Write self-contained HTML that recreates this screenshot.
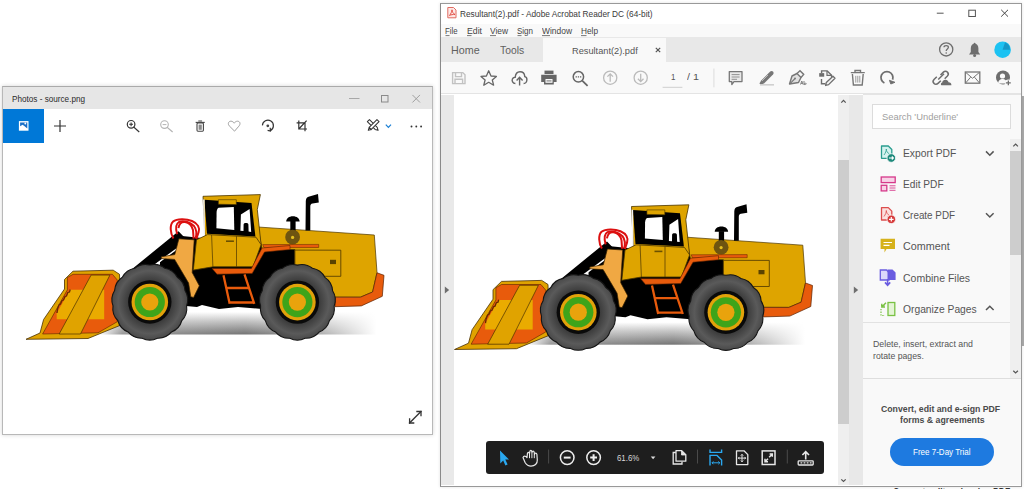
<!DOCTYPE html>
<html><head><meta charset="utf-8">
<style>
*{margin:0;padding:0;box-sizing:border-box}
html,body{width:1024px;height:489px;overflow:hidden;background:#fff;font-family:"Liberation Sans",sans-serif;position:relative}
.a{position:absolute}
.t{position:absolute;white-space:nowrap;line-height:1}
svg{position:absolute;overflow:visible}
</style></head><body>

<!-- ================= PHOTOS WINDOW ================= -->
<div class="a" style="left:2px;top:86px;width:431px;height:349px;border:1px solid #b8b8b8;border-top-color:#aaa;background:#fff;box-shadow:0 0 4px rgba(0,0,0,0.17)"></div>
<div class="a" style="left:3px;top:87px;width:429px;height:22px;background:#e6e6e6"></div>
<div class="a" style="left:3px;top:109px;width:41px;height:34px;background:#0078d7"></div>


<!-- photos icons -->
<svg class="a" style="left:0;top:0" width="1024" height="489" viewBox="0 0 1024 489">
 <g fill="none" stroke-linecap="square">
  <!-- title controls -->
  <line x1="349.5" y1="98.5" x2="359" y2="98.5" stroke="#a8a8a8" stroke-width="1"/>
  <rect x="381.5" y="95.5" width="6.5" height="6.5" stroke="#8a8a8a" stroke-width="1"/>
  <path d="M412.8 95.3 L419.6 102.1 M419.6 95.3 L412.8 102.1" stroke="#a0a0a0" stroke-width="1"/>
  <!-- blue btn icon -->
  <rect x="18.9" y="121.1" width="9.6" height="9.6" fill="#fff" stroke="none"/>
  <path d="M20.1 122.4 H27.3 V128.6 L24.3 126 L22.6 124.8 L20.1 126.3 Z" fill="#1a70c8" stroke="none"/>
  <circle cx="25.3" cy="123.5" r="0.9" fill="#fff" stroke="none"/>
  <!-- plus -->
  <path d="M54 126 L66 126 M60 120 L60 132" stroke="#333" stroke-width="1.2" stroke-linecap="butt"/>
  <!-- zoom in -->
  <circle cx="131.1" cy="124.3" r="3.8" stroke="#333" stroke-width="1.2"/>
  <path d="M133.9 127.1 L138.8 131.6" stroke="#333" stroke-width="1.2"/>
  <path d="M129.2 124.3 L133 124.3 M131.1 122.4 L131.1 126.2" stroke="#333" stroke-width="1.1" stroke-linecap="butt"/>
  <!-- zoom out -->
  <circle cx="164.5" cy="124.6" r="3.8" stroke="#b4b4b4" stroke-width="1.1"/>
  <path d="M167.3 127.4 L172.2 131.6" stroke="#b4b4b4" stroke-width="1.2"/>
  <path d="M162.6 124.6 L166.4 124.6" stroke="#b4b4b4" stroke-width="1" stroke-linecap="butt"/>
  <!-- delete -->
  <path d="M196.2 122.4 L204.2 122.4" stroke="#444" stroke-width="1.1"/>
  <path d="M198.8 121 L201.6 121" stroke="#444" stroke-width="1"/>
  <rect x="197" y="123" width="6.4" height="8.2" rx="0.9" stroke="#444" stroke-width="1.1"/>
  <rect x="198.6" y="124.6" width="3.2" height="5.2" fill="#8a8a8a" stroke="none"/>
  <!-- heart -->
  <path d="M234.2 130.8 L229.2 125.8 C227.6 124 228.3 121.3 230.8 121.2 C232.3 121.1 233.6 122.2 234.2 123.2 C234.8 122.2 236.1 121.1 237.6 121.2 C240.1 121.3 240.8 124 239.2 125.8 Z" stroke="#a0a0a0" stroke-width="1"/>
  <!-- rotate -->
  <path d="M262.4 125.4 A5.5 5.5 0 1 1 270.4 130.6" stroke="#333" stroke-width="1.2" stroke-linecap="butt"/>
  <path d="M270.2 127.8 L270.4 131 L267.6 130.4" stroke="#333" stroke-width="1.2" stroke-linecap="butt"/>
  <circle cx="267.8" cy="125.8" r="1.4" fill="#444" stroke="none"/>
  <!-- crop -->
  <path d="M298.8 120.5 V129 H307 M296.6 122.8 H305 V131.2 M298.8 129 L306.6 120.7" stroke="#333" stroke-width="1.2" stroke-linecap="butt"/>
  <!-- edit pencils -->
  <g transform="translate(373.2 125.4) rotate(-135)"><path d="M-7 0 L-4.2 -1.5 H6.8 V1.5 H-4.2 Z" stroke="#333" stroke-width="1" fill="#fff" stroke-linejoin="round"/></g>
  <g transform="translate(373.2 125.4) rotate(-45)"><path d="M-7 0 L-4.2 -1.5 H6.8 V1.5 H-4.2 Z M-4.2 -1.5 V1.5" stroke="#333" stroke-width="1" fill="#fff" stroke-linejoin="round"/></g>
  <path d="M385.8 124.6 L388.4 127.4 L391 124.6" stroke="#1a7fd4" stroke-width="1.2" stroke-linecap="butt"/>
  <circle cx="411.5" cy="126.5" r="0.95" fill="#333" stroke="none"/>
  <circle cx="416.3" cy="126.5" r="0.95" fill="#333" stroke="none"/>
  <circle cx="421.1" cy="126.5" r="0.95" fill="#333" stroke="none"/>
  <!-- resize -->
  <path d="M409.5 423 L421 411.5" stroke="#333" stroke-width="1.3"/>
  <path d="M409.6 418.3 L409.6 423 L414.3 423 M416.3 411.5 L421 411.5 L421 416.2" stroke="#333" stroke-width="1.3" stroke-linecap="butt"/>
 </g>
</svg>

<!-- ================= ACROBAT WINDOW ================= -->
<div class="a" style="left:1022px;top:96px;width:2px;height:250px;background:#ababab"></div>
<div class="a" style="left:440px;top:3px;width:582px;height:484px;border:1px solid #999;border-left-color:#8a8a8a;background:#fff;box-shadow:0 0 3px rgba(0,0,0,0.12)"></div>
<div class="a" style="left:441px;top:24px;width:580px;height:13px;background:#f9f9f9"></div>
<div class="a" style="left:441px;top:37px;width:580px;height:25px;background:#e8e8e8"></div>
<div class="a" style="left:543px;top:38px;width:123px;height:24px;background:#f9f9f9"></div>
<div class="a" style="left:441px;top:62px;width:580px;height:32px;background:#f9f9f9;border-bottom:1px solid #e4e4e4"></div>

<!-- doc area -->
<div class="a" style="left:441px;top:95px;width:13px;height:390px;background:#e9e9e9"></div>
<div class="a" style="left:838px;top:95px;width:11px;height:390px;background:#efefef"></div>
<div class="a" style="left:838px;top:160px;width:11px;height:264px;background:#cdcdcd"></div>
<div class="a" style="left:849px;top:95px;width:14px;height:390px;background:#e8e8e8"></div>
<div class="a" style="left:863px;top:95px;width:158px;height:390px;background:#f9f9f9"></div>


<!-- search box -->
<div class="a" style="left:872px;top:104px;width:139px;height:25px;background:#fff;border:1px solid #dcdcdc"></div>
<!-- tools list scrollbar -->
<div class="a" style="left:1010px;top:139px;width:11px;height:239px;background:#efefef"></div>
<div class="a" style="left:1010px;top:151px;width:11px;height:104px;background:#cdcdcd"></div>
<!-- separators -->
<div class="a" style="left:863px;top:322px;width:147px;height:1px;background:#e2e2e2"></div>
<div class="a" style="left:863px;top:378px;width:158px;height:1px;background:#dedede"></div>
<div class="a" style="left:863px;top:94px;width:158px;height:1px;background:#e4e4e4"></div>
<!-- trial button -->
<div class="a" style="left:890px;top:438px;width:104px;height:28px;border-radius:14px;background:#1e7ae0"></div>
<!-- bottom floating toolbar -->
<div class="a" style="left:486px;top:441px;width:338px;height:33px;border-radius:3px;background:#1e1e1e"></div>

<!-- acrobat icons -->
<svg class="a" style="left:0;top:0" width="1024" height="489" viewBox="0 0 1024 489">
 <g fill="none" stroke-linecap="butt">
  <!-- pdf title icon -->
  <path d="M447.8 7.5 L453.5 7.5 L456 10 L456 17.8 L447.8 17.8 Z" fill="#fde8e6" stroke="#e06a60" stroke-width="1"/>
  <path d="M449.5 15.5 C451 13.5 452 11.5 452 9.8 C452 11.5 453 13.5 455 14.5 C453 14.2 451 14.8 449.5 15.5 Z" stroke="#e0443a" stroke-width="0.9"/>
  <!-- window controls -->
  <line x1="936.8" y1="13.2" x2="943.6" y2="13.2" stroke="#555" stroke-width="1"/>
  <rect x="968.8" y="10.2" width="6.6" height="6.3" stroke="#555" stroke-width="1"/>
  <path d="M1001.2 9.8 L1008 16.6 M1008 9.8 L1001.2 16.6" stroke="#444" stroke-width="1"/>
  <!-- menu underlines -->
  <path d="M445.5 35.6 H449.5 M467 35.6 H471.5 M490 35.6 H496 M517.5 35.6 H521.5 M542 35.6 H550 M581 35.6 H586.5" stroke="#555" stroke-width="0.8"/>
  <!-- tab close x -->
  <path d="M655.8 47.8 L660.2 52.2 M660.2 47.8 L655.8 52.2" stroke="#555" stroke-width="1.2"/>
  <!-- help -->
  <circle cx="946.2" cy="49.4" r="6.6" stroke="#6e6e6e" stroke-width="1.3"/>
  <path d="M944 47.3 C944 45 948.4 45 948.4 47.3 C948.4 49 946.2 49 946.2 51" stroke="#6e6e6e" stroke-width="1.3"/>
  <circle cx="946.2" cy="53" r="0.8" fill="#6e6e6e"/>
  <!-- bell -->
  <path d="M969 54.5 L980.2 54.5 L978.4 52 L978.4 48.3 C978.4 45.6 977 44 974.6 43.5 C972.2 44 970.8 45.6 970.8 48.3 L970.8 52 Z" fill="#6e6e6e"/>
  <circle cx="974.6" cy="55.6" r="1.5" fill="#6e6e6e"/>
  <circle cx="974.6" cy="43.6" r="0.9" fill="#6e6e6e"/>
  <!-- avatar -->
  <circle cx="1002.6" cy="49.7" r="8.3" fill="#1cc2f2"/>
  <path d="M1002.6 49.7 L1010 49.7 A7.4 7.4 0 0 0 1005 42.6 Z" fill="#1598c8"/>

  <!-- toolbar -->
  <g stroke="#c2c2c2" stroke-width="1.4">
   <path d="M452.6 72.6 H462.8 L465 74.8 V83.6 H452.6 Z"/>
   <path d="M455.5 72.6 V76.6 H461.5 V72.6 M455 83.6 V79.2 H462.6 V83.6"/>
  </g>
  <path d="M488.7 70.8 L491 76 L496.4 76.4 L492.3 80 L493.6 85.2 L488.7 82.3 L483.8 85.2 L485.1 80 L481 76.4 L486.4 76 Z" stroke="#666" stroke-width="1.3" stroke-linejoin="round"/>
  <path d="M515.4 83.5 C512.5 83.5 511.8 80.8 512.3 79.3 C512.7 78 514 77.2 515.2 77.3 C515.5 74 517.5 71.8 520 71.8 C522.8 71.8 524.6 74 524.8 76.6 C526.5 77 527 78.5 526.9 80 C526.7 82 525.4 83.5 523.6 83.5" stroke="#666" stroke-width="1.4"/>
  <path d="M519.6 85.5 V77.5 M516.6 80.4 L519.6 77.3 L522.6 80.4" stroke="#666" stroke-width="1.4"/>
  <path d="M544.5 70.6 H553.5 V74 H544.5 Z" fill="#666"/>
  <path d="M541.2 74.8 H556.6 V82 H553.8 V84.4 H544 V82 H541.2 Z" fill="#666"/>
  <rect x="545.5" y="79" width="7" height="3.8" fill="#f9f9f9"/>
  <rect x="546.5" y="80.3" width="5" height="1.2" fill="#888"/>
  <circle cx="578.4" cy="76.8" r="5.2" stroke="#666" stroke-width="1.5"/>
  <path d="M582.2 80.7 L587.6 85.8" stroke="#666" stroke-width="1.8"/>
  <path d="M575.6 76.8 h1.3 M577.8 76.8 h1.3 M580 76.8 h1.3" stroke="#666" stroke-width="1.2"/>
  <circle cx="610.2" cy="77.7" r="6.6" stroke="#bbb" stroke-width="1.3"/>
  <path d="M610.2 81.7 V73.8 M607.4 76.6 L610.2 73.8 L613 76.6" stroke="#bbb" stroke-width="1.3"/>
  <circle cx="640.7" cy="77.7" r="6.6" stroke="#bbb" stroke-width="1.3"/>
  <path d="M640.7 73.7 V81.6 M637.9 78.8 L640.7 81.6 L643.5 78.8" stroke="#bbb" stroke-width="1.3"/>
  <line x1="662.6" y1="87.3" x2="682.4" y2="87.3" stroke="#cfcfcf" stroke-width="1"/>
  <line x1="713.9" y1="68.5" x2="713.9" y2="87.3" stroke="#dcdcdc" stroke-width="1"/>
  <!-- comment -->
  <path d="M729.3 71.6 H742 V81.6 H734 L731.8 84.6 V81.6 H729.3 Z" fill="#e9e9e9" stroke="#777" stroke-width="1.3" stroke-linejoin="round"/>
  <path d="M731.6 74.6 H739.6 M731.6 77 H739.6 M731.6 79.3 H737" stroke="#888" stroke-width="0.9"/>
  <!-- highlighter -->
  <path d="M759.4 83.6 L761.2 80.5 L770.2 71.5 C771 70.8 772.2 70.8 773 71.6 C773.8 72.4 773.8 73.6 773 74.4 L764 83.4 L761 84.4 Z" fill="#777"/>
  <path d="M762 81 L768 75" stroke="#bbb" stroke-width="1"/>
  <rect x="760" y="84" width="14" height="1.6" fill="#d0d0d0"/>
  <!-- pen sign -->
  <path d="M789.5 84 L792 76 L797 73.5 L801 77.5 L798.5 82.5 Z" fill="#e0e0e0" stroke="#777" stroke-width="1.4" stroke-linejoin="round"/>
  <path d="M797 73.5 L800 70.7 L803.7 74.4 L801 77.5" stroke="#777" stroke-width="1.4"/>
  <path d="M789.8 83.8 L794.6 79" stroke="#777" stroke-width="1.1"/>
  <circle cx="795" cy="78.6" r="1" fill="#777"/>
  <path d="M800.5 84.5 L801.8 81 L803 84.5 M801 83.4 H802.7 M804 81 V84.5 C804 83 806.3 83 806.3 83.8 C806.3 84.6 804 84.6 804 84.5" stroke="#777" stroke-width="0.9"/>
  <!-- organize -->
  <path d="M821.6 73 V70.9 H827.2 L831.6 75.3 V77" stroke="#6e6e6e" stroke-width="1.4"/>
  <path d="M827 71 V75.4 H831.6" stroke="#6e6e6e" stroke-width="1.2"/>
  <rect x="819.2" y="73.1" width="5" height="3.6" fill="#6e6e6e"/>
  <path d="M821.5 79 V83.7 H825.3" stroke="#6e6e6e" stroke-width="1.4"/>
  <path d="M825.6 85.5 L826.3 82.4 L833 76.2 L835 78.2 L828.6 84.6 Z" fill="#f4f4f4" stroke="#6e6e6e" stroke-width="1.3" stroke-linejoin="round"/>
  <!-- trash -->
  <path d="M850.8 72.6 H864.8 M855 72.6 V70.5 H860.5 V72.6" stroke="#777" stroke-width="1.4"/>
  <path d="M852.4 74 L853.4 85 H862.2 L863.2 74" stroke="#777" stroke-width="1.4"/>
  <path d="M855.8 75.8 V82.6 M857.8 75.8 V82.6 M859.8 75.8 V82.6" stroke="#999" stroke-width="1"/>
  <!-- rotate -->
  <path d="M884.4 83 A6 6 0 1 1 892.6 79.6" stroke="#6e6e6e" stroke-width="1.8"/>
  <path d="M889.4 80.3 L895 82.3 L890.8 84 Z" fill="#6e6e6e" stroke="#6e6e6e" stroke-width="0.9" stroke-linejoin="round"/>
  <!-- link -->
  <path d="M940.5 75 L943.4 72.1 C944.6 70.9 946.3 70.9 947.4 72.1 C948.5 73.2 948.5 74.9 947.4 76.1 L944.7 78.8 M940.8 80.7 L938 83.4 C936.8 84.6 935.1 84.6 934 83.4 C932.9 82.3 932.9 80.6 934 79.5 L936.8 76.7" stroke="#6e6e6e" stroke-width="1.5"/>
  <path d="M938.2 79.5 L944 73.7" stroke="#6e6e6e" stroke-width="1.5"/>
  <path d="M941.4 85.2 C940.6 85.2 940.6 82.8 942.2 82.5 C942.6 80.4 944.2 79.6 945.6 79.8 C947 80 948.2 80.8 948.5 82.3 C950.3 82.3 951.6 83.3 951.4 85.2 Z" fill="#6e6e6e"/>
  <!-- mail -->
  <rect x="965.3" y="72" width="14.5" height="11.2" stroke="#777" stroke-width="1.3"/>
  <path d="M965.6 72.3 L972.5 78.3 L979.5 72.3 M965.6 83 L970.6 77.2 M979.5 83 L974.5 77.2" stroke="#777" stroke-width="1"/>
  <!-- person -->
  <circle cx="1003" cy="77.5" r="7" fill="#6e6e6e"/>
  <circle cx="1002.5" cy="76" r="2.6" fill="#f9f9f9"/>
  <path d="M998 83.5 C998.5 80 1000.5 79 1002.5 79 C1004.5 79 1006.5 80 1007 83.5 Z" fill="#f9f9f9"/>
  <circle cx="1008.3" cy="82.8" r="3.2" fill="#f9f9f9"/>
  <path d="M1005.9 82.8 H1010.8 M1008.35 80.4 V85.2" stroke="#6e6e6e" stroke-width="1.3"/>

  <!-- left nav arrow / splitter arrow / scroll arrows -->
  <path d="M444.8 286.4 L449.2 290 L444.8 293.6 Z" fill="#6e6e6e"/>
  <path d="M853.8 286.4 L858.2 290 L853.8 293.6 Z" fill="#6e6e6e"/>
  <path d="M841.3 102.6 L843.5 100.4 L845.7 102.6" stroke="#555" stroke-width="1.2"/>
  <path d="M841.3 479.3 L843.5 481.5 L845.7 479.3" stroke="#555" stroke-width="1.2"/>
  <path d="M1013.3 146.3 L1015.6 144 L1017.9 146.3" stroke="#555" stroke-width="1.2"/>
  <path d="M1013.3 370.8 L1015.6 373 L1017.9 370.8" stroke="#555" stroke-width="1.2"/>

  <!-- tool pane icons -->
  <path d="M881.5 146 H888.3 L891.8 149.5 V158.3 H881.5 Z" fill="#d4f2ee" stroke="#2a9d8f" stroke-width="1.3" stroke-linejoin="round"/>
  <path d="M884 155 C885.5 153 886.3 151 886.3 149 C886.3 151 887.5 153 889.5 154" stroke="#2a9d8f" stroke-width="0.8"/>
  <circle cx="891.3" cy="158" r="4.3" fill="#1f8a7c" stroke="#f9f9f9" stroke-width="0.8"/>
  <path d="M889 158 H893.2 M891.8 156.5 L893.4 158 L891.8 159.5" stroke="#fff" stroke-width="1.1"/>
  <rect x="881.2" y="177" width="14" height="5.6" fill="#f7d2e6" stroke="#d6388a" stroke-width="1.3"/>
  <rect x="881.2" y="185.3" width="5.6" height="5.6" fill="#f7d2e6" stroke="#d6388a" stroke-width="1.3"/>
  <path d="M889.5 185.8 H895.5 M889.5 188 H895.5 M889.5 190.3 H895.5" stroke="#d6388a" stroke-width="0.9"/>
  <path d="M881.5 207.6 H888.3 L891.8 211.1 V220 H881.5 Z" fill="#fbe0de" stroke="#dc4d4d" stroke-width="1.3" stroke-linejoin="round"/>
  <path d="M884 216.5 C885.5 214.5 886.3 212.5 886.3 210.5 C886.3 212.5 887.5 214.5 889.5 215.5" stroke="#dc4d4d" stroke-width="0.8"/>
  <circle cx="891.3" cy="219.3" r="4.3" fill="#d63a3a" stroke="#f9f9f9" stroke-width="0.8"/>
  <path d="M889 219.3 H893.6 M891.3 217 V221.6" stroke="#fff" stroke-width="1.2"/>
  <path d="M880.6 238.8 H895 V249 H886.5 L884.5 252.6 V249 H880.6 Z" fill="#d6b21c"/>
  <path d="M883.5 242.5 H892 M883.5 245.4 H889.5" stroke="#fff" stroke-width="1.1"/>
  <path d="M880.3 270 H886.5 L889 272.5 V280 H880.3 Z" fill="#dcd8fa" stroke="#6a5ce0" stroke-width="1.3"/>
  <path d="M887.5 269.5 H892.5 L895.6 272.6 V280 H887.5 Z" fill="#6a5ce0"/>
  <path d="M887.6 279 V285 M885 282.4 L887.6 285.2 L890.2 282.4" stroke="#6a5ce0" stroke-width="1.6"/>
  <rect x="888" y="302.5" width="6.8" height="13" fill="#e4f4d6" stroke="#79c143" stroke-width="1.3"/>
  <path d="M881 305.5 H884.5 M881 309 V315.5 H885" stroke="#79c143" stroke-width="1.2" stroke-dasharray="1.3 1.3"/>
  <path d="M886 302.8 L882 306.8 M881.8 303.8 V307 H885" stroke="#79c143" stroke-width="1.4"/>
  <!-- chevrons -->
  <path d="M986 151.4 L989.8 155.2 L993.6 151.4" stroke="#555" stroke-width="1.5"/>
  <path d="M986 213.2 L989.8 217 L993.6 213.2" stroke="#555" stroke-width="1.5"/>
  <path d="M986 310 L989.8 306.2 L993.6 310" stroke="#555" stroke-width="1.5"/>

  <!-- bottom toolbar icons -->
  <path d="M500 450.4 L509 459.4 L505.3 459.6 L507.6 464.6 L505.4 465.5 L503.2 460.5 L500.3 463.4 Z" fill="#2aa8f0"/>
  <path d="M523 457.6 C523.6 455.6 525.6 455.6 527 457.6 L527.4 453.6 C527.6 451.9 529.3 451.9 529.5 453.6 L529.8 451.6 C530.1 449.9 531.6 449.9 531.8 451.6 L532 452.4 C532.3 450.8 534 450.8 534.2 452.4 L534.5 454.4 C534.8 452.8 536.6 452.8 536.9 454.4 L537.3 460 C537.5 464 534.6 466.1 531 466.1 C528 466.1 526.4 464.6 525.1 462.5 Z" stroke="#e8e8e8" stroke-width="1.2" stroke-linejoin="round"/>
  <path d="M529.5 453.6 V458.2 M531.9 452.4 V458.2 M534.3 454.2 V458.2" stroke="#e8e8e8" stroke-width="1"/>
  <line x1="548.6" y1="449.6" x2="548.6" y2="463.5" stroke="#4a4a4a" stroke-width="1"/>
  <circle cx="567.2" cy="457.6" r="6.8" stroke="#eee" stroke-width="1.5"/>
  <path d="M563.8 457.6 H570.6" stroke="#eee" stroke-width="2"/>
  <circle cx="593.6" cy="457.6" r="6.8" stroke="#eee" stroke-width="1.5"/>
  <path d="M590.2 457.6 H597 M593.6 454.2 V461" stroke="#eee" stroke-width="2"/>
  <path d="M650.8 456.6 H655.4 L653.1 459.2 Z" fill="#ddd"/>
  <path d="M675.8 452.5 H673.2 V464 H682 V461.8" stroke="#e8e8e8" stroke-width="1.3"/>
  <path d="M676 450.6 H681.7 L685.8 454.7 V461.2 H676 Z" stroke="#e8e8e8" stroke-width="1.3" stroke-linejoin="round"/>
  <path d="M681.5 450.8 V455 H685.6" fill="#e8e8e8" stroke="#e8e8e8" stroke-width="0.8"/>
  <line x1="697.5" y1="449.6" x2="697.5" y2="463.5" stroke="#4a4a4a" stroke-width="1"/>
  <path d="M710 449.5 V452.4 H721.6 V449.5" stroke="#2aa8f0" stroke-width="1.4"/>
  <path d="M710 465.6 V455.4 H717 L721.6 460 V465.6" stroke="#2aa8f0" stroke-width="1.4"/>
  <path d="M712 462.8 H719.8 M713.4 461.4 L712 462.8 L713.4 464.2 M718.4 461.4 L719.8 462.8 L718.4 464.2" stroke="#2aa8f0" stroke-width="1"/>
  <path d="M736.5 450.8 H744 L747.8 454.6 V464.6 H736.5 Z" stroke="#e8e8e8" stroke-width="1.3" stroke-linejoin="round"/>
  <path d="M742 454.4 V461.8 M738.3 458.1 H745.7 M740.8 455.6 L742 454.4 L743.2 455.6 M740.8 460.6 L742 461.8 L743.2 460.6 M739.5 456.9 L738.3 458.1 L739.5 459.3 M744.5 456.9 L745.7 458.1 L744.5 459.3" stroke="#e8e8e8" stroke-width="1"/>
  <rect x="762.2" y="450.9" width="12.8" height="13.6" stroke="#e8e8e8" stroke-width="1.5"/>
  <path d="M765 461.8 L768 458.8 M765 458.8 V461.8 H768 M769.2 457.2 L772.3 454 M769.6 454 H772.3 V456.7" stroke="#e8e8e8" stroke-width="1.5"/>
  <line x1="787.3" y1="449.6" x2="787.3" y2="463.5" stroke="#4a4a4a" stroke-width="1"/>
  <path d="M805.7 459.4 V451.8 M802.4 455 L805.7 451.6 L809 455" stroke="#e8e8e8" stroke-width="1.6"/>
  <rect x="798.2" y="460.8" width="15" height="4.2" rx="0.8" stroke="#e8e8e8" stroke-width="1.3"/>
  <path d="M800.5 462.9 h1.8 M803.6 462.9 h1.8 M806.7 462.9 h1.8 M809.8 462.9 h1.8" stroke="#e8e8e8" stroke-width="1.2"/>
 </g>
</svg>


<!-- loaders -->
<svg class="a" style="left:0;top:0" width="1024" height="489" viewBox="0 0 1024 489">
 <defs>
  <radialGradient id="tire" cx="0.5" cy="0.5" r="0.52">
   <stop offset="0.55" stop-color="#3c3c3c"/>
   <stop offset="0.8" stop-color="#5a5a5a"/>
   <stop offset="1" stop-color="#444"/>
  </radialGradient>
  <linearGradient id="shad" x1="0" y1="0" x2="0" y2="1">
   <stop offset="0" stop-color="#fff"/>
   <stop offset="0.4" stop-color="#c4c4c4"/>
   <stop offset="1" stop-color="#747474"/>
  </linearGradient>
  <linearGradient id="shadx" x1="0" y1="0" x2="1" y2="0">
   <stop offset="0" stop-color="#fff" stop-opacity="1"/>
   <stop offset="0.08" stop-color="#fff" stop-opacity="0.25"/>
   <stop offset="0.5" stop-color="#fff" stop-opacity="0"/>
   <stop offset="0.72" stop-color="#fff" stop-opacity="0.3"/>
   <stop offset="0.95" stop-color="#fff" stop-opacity="1"/>
  </linearGradient>
  <g id="wheel">
   <path d="M0.00 -37.00Q8.32 -39.13 15.05 -33.80Q23.51 -32.36 27.50 -24.76Q34.64 -20.00 35.19 -11.43Q39.78 -4.18 36.80 3.87Q38.04 12.36 32.04 18.50Q29.73 26.77 21.75 29.93Q16.27 36.54 7.69 36.19Q0.00 40.00 -7.69 36.19Q-16.27 36.54 -21.75 29.93Q-29.73 26.77 -32.04 18.50Q-38.04 12.36 -36.80 3.87Q-39.78 -4.18 -35.19 -11.43Q-34.64 -20.00 -27.50 -24.76Q-23.51 -32.36 -15.05 -33.80Q-8.32 -39.13 -0.00 -37.00Z" fill="url(#tire)" stroke="#151515" stroke-width="1.1"/>
   <circle r="21.7" fill="#0a0a0a"/>
   <circle r="18.3" fill="#e2a20a"/>
   <circle r="15.1" fill="#3ea41a"/>
   <circle r="8.6" fill="#e9a30c"/>
  </g>
  <g id="loader">
   <!-- shadow -->
   <rect x="100" y="312" width="290" height="22.5" fill="url(#shad)"/>
   <rect x="99" y="311" width="292" height="24" fill="url(#shadx)"/>
   <!-- black undercarriage -->
   <path d="M160 262 L182 236 L262 244 L332 252 L334 300 L262 309 L238 307 L219 309 L202 305 L197 307 L186 306 L160 290 Z" fill="#000"/>
   <!-- body -->
   <path d="M258 227 L374.3 235 L377 272.5 L372.6 292 L360.4 297.2 L310 297 L294.9 276.3 L294.9 249.5 L262 249 Z" fill="#dea400" stroke="#4a3500" stroke-width="0.7"/>
   <!-- bumper -->
   <path d="M377 272.8 L384 275.3 L382.3 296.3 L361.3 305.9 L335 306.7 L335 297.2 L360.4 297.2 L372.6 292 Z" fill="#e85b0c" stroke="#5a2000" stroke-width="0.7"/>
   <!-- engine door -->
   <path d="M294.9 250.1 L340.8 250.2 L340.8 276.3 L294.9 276.3 Z" fill="#dea400" stroke="#4a3500" stroke-width="0.8"/>
   <rect x="330" y="259.8" width="6" height="4.3" fill="#5a4200"/>
   <!-- exhaust -->
   <path d="M305.5 230.5 L305.8 201 C306 198.5 307 197.3 308.5 196.8 L318 194 L318.8 202.5 L312.5 203.5 C311 203.8 310.3 204.8 310.3 206.5 L310.3 230.5 Z" fill="#000"/>
   <!-- air intake -->
   <path d="M290.3 221 L295.6 221 L295.6 232 L290.3 232 Z" fill="#000"/>
   <path d="M286.2 221.6 C286.2 218.5 289 216.3 292.9 216.3 C296.8 216.3 299.6 218.5 299.6 221.6 Z" fill="#000"/>
   <circle cx="292.6" cy="237.1" r="7.4" fill="#6e5410"/>
   <circle cx="292.6" cy="237.4" r="1.6" fill="#e4c020"/>
   <!-- fender line -->
   <path d="M262.7 244.6 L318.7 244.4 L318.7 247.5 L264 247.7 Z" fill="#e85b0c" stroke="#5a2000" stroke-width="0.5"/>
   <!-- cab upper -->
   <path d="M203 196.3 L260.4 194.6 L257.3 209.5 L261.1 244.7 L205 238 Z" fill="#dea400" stroke="#4a3500" stroke-width="0.8"/>
   <path d="M204.4 199.8 L251.5 203 L255.4 236.4 L207 233.8 Z" fill="#000"/>
   <path d="M218.4 199.7 L236.3 199.7 L236.3 204.6 L218.4 204.2 Z" fill="#dea400" stroke="#4a3500" stroke-width="0.6"/>
   <path d="M218.6 207.8 L233.8 206.9 L234.3 229.9 L216.4 228.3 L216.6 212 C216.8 209.8 217.5 208.3 218.6 207.8 Z" fill="#fff"/>
   <path d="M240.9 214.5 L249.6 208.9 L251.2 231.9 L248.6 231.6 L248.4 224.5 C248.2 222.6 243.8 222.6 243.6 224.5 L243.5 231 L240.4 230.7 Z" fill="#fff"/>
   <path d="M203.1 199.5 L203.6 236 L205 236 L204.6 199.5 Z" fill="#f4f4f4"/>
   <!-- cab lower -->
   <path d="M196.5 239.8 L207.5 234.6 L256 237.2 L261.1 244.7 L253 266.8 L212.9 266.8 L193.3 270.1 Z" fill="#dea400" stroke="#4a3500" stroke-width="0.8"/>
   <path d="M211.6 235 L212.9 266.8 M236.5 236.2 L236.5 266.8" stroke="#4a3500" stroke-width="0.7" fill="none"/>
   <rect x="226" y="240.4" width="7.9" height="1.6" fill="#6b5000"/>
   <!-- orange step band -->
   <path d="M212.1 268.5 L251.4 268.5 L262 248 L290 245.5 L290 249.5 L264.5 252 L252.2 273.4 L217 274.2 Z" fill="#e85b0c" stroke="#5a2000" stroke-width="0.6"/>
   <!-- ladder -->
   <path d="M223.5 275.2 L229.7 303.8 M244.5 274.4 L254.3 303.8 M226.3 288 L249 288 M229.2 302.5 L253.6 302.5" stroke="#e85b0c" stroke-width="2.3" fill="none"/>
   <!-- lift arm black -->
   <path d="M126 274 L178.5 231.2 L184.5 237.5 L186.5 242.5 L150 268 L140 280 Z" fill="#000"/>
   <path d="M153.5 266 L180 246.5" stroke="#fff" stroke-width="1.5" fill="none"/>
   <!-- red hoses -->
   <g fill="none" stroke="#dc1010" stroke-width="2">
    <path d="M173.4 238.4 C170.2 233 169.6 225 173 221.6 C177 218.6 186 218.6 192 221 C198 223.5 200 228 198.6 232.2 L196.4 238.6"/>
    <path d="M177.2 234.2 C175.6 229 175.6 224 179 222 C183 220 190 222 194 226 C197 230 196.6 235 195.6 238.6"/>
    <path d="M178.4 228.2 C179.2 223.6 182 221.6 185 222 C189 222.6 192 226 193 230 L193.6 238.6"/>
   </g>
   <!-- boom light orange -->
   <path d="M161.3 256.8 L174.8 254.6 L178.9 238.8 L194.2 239.8 L192.2 272.5 L199.3 285.8 L193.6 297.4 L190.8 296.8 L188.6 283 L174.6 259.4 L161.3 258.6 Z" fill="#f0a843" stroke="#3a2200" stroke-width="0.7"/>
   <!-- bucket -->
   <path d="M26 339.3 L40 333 L43.6 319.5 L64.5 289 L64.5 279.5 L73 271.2 L113.2 270.2 L119.5 274.3 L121 325 L88 338.5 Z" fill="#e0a300" stroke="#4a3000" stroke-width="0.8"/>
   <path d="M42.6 334 L67.4 289.8 L67.4 277.5 L73.1 274.3 L112.4 274.3 L117.3 280 L117.3 321.7 L98 332.8 Z" fill="#e85b0c" stroke="#5a2000" stroke-width="0.6"/>
   <path d="M69.8 289.8 L104.2 289.8 L104.2 319.3 L56.7 319.3 L56.7 313.5 Z" fill="#eaab00"/>
   <path d="M59.2 334 L91.1 275.1 L109.9 275.1 L80.5 334 Z" fill="#e0a300" stroke="#4a3000" stroke-width="0.7"/>
   <path d="M70.2 289.5 L69.5 292 L67.8 292.5 L66.5 296 L65 296.5 L63.5 300 L62 300.5 L60.5 304 L59 305 L57.5 309 L57 313" stroke="#6a2a00" stroke-width="1.3" fill="none"/>
   <!-- wheels -->
   <use href="#wheel" x="149.8" y="302"/>
   <use href="#wheel" x="297.4" y="302.1"/>
  </g>
 </defs>
 <use href="#loader"/>
 <use href="#loader" x="428.5" y="10.2"/>
</svg>

<!--TEXT-->
<span class="t" style="left:11.7px;top:95.08px;font-size:8.64px;color:#2b2b2b;font-weight:400;transform:scaleX(0.946);transform-origin:0 0;">Photos - source.png</span>
<span class="t" style="left:460.4px;top:8.87px;font-size:9.60px;color:#3a3a3a;font-weight:400;transform:scaleX(0.864);transform-origin:0 0;">Resultant(2).pdf - Adobe Acrobat Reader DC (64-bit)</span>
<span class="t" style="left:445.4px;top:27.17px;font-size:8.78px;color:#444;font-weight:400;transform:scaleX(0.892);transform-origin:0 0;">File</span>
<span class="t" style="left:467.0px;top:27.17px;font-size:8.78px;color:#444;font-weight:400;transform:scaleX(0.993);transform-origin:0 0;">Edit</span>
<span class="t" style="left:490.0px;top:27.17px;font-size:8.78px;color:#444;font-weight:400;transform:scaleX(0.955);transform-origin:0 0;">View</span>
<span class="t" style="left:517.0px;top:27.17px;font-size:8.78px;color:#444;font-weight:400;transform:scaleX(0.912);transform-origin:0 0;">Sign</span>
<span class="t" style="left:542.0px;top:27.17px;font-size:8.78px;color:#444;font-weight:400;transform:scaleX(0.962);transform-origin:0 0;">Window</span>
<span class="t" style="left:581.0px;top:27.17px;font-size:8.78px;color:#444;font-weight:400;transform:scaleX(0.943);transform-origin:0 0;">Help</span>
<span class="t" style="left:451.2px;top:44.71px;font-size:10.97px;color:#606060;font-weight:400;transform:scaleX(0.977);transform-origin:0 0;">Home</span>
<span class="t" style="left:499.8px;top:44.71px;font-size:10.97px;color:#606060;font-weight:400;transform:scaleX(0.941);transform-origin:0 0;">Tools</span>
<span class="t" style="left:571.7px;top:45.84px;font-size:9.88px;color:#555;font-weight:400;transform:scaleX(0.935);transform-origin:0 0;">Resultant(2).pdf</span>
<span class="t" style="left:882.0px;top:112.14px;font-size:9.88px;color:#a0a0a0;font-weight:400;transform:scaleX(0.951);transform-origin:0 0;">Search 'Underline'</span>
<span class="t" style="left:903.3px;top:149.38px;font-size:10.43px;color:#555;font-weight:400;transform:scaleX(0.989);transform-origin:0 0;">Export PDF</span>
<span class="t" style="left:903.3px;top:180.08px;font-size:10.43px;color:#555;font-weight:400;transform:scaleX(0.973);transform-origin:0 0;">Edit PDF</span>
<span class="t" style="left:903.3px;top:211.28px;font-size:10.43px;color:#555;font-weight:400;transform:scaleX(0.946);transform-origin:0 0;">Create PDF</span>
<span class="t" style="left:903.3px;top:241.98px;font-size:10.43px;color:#555;font-weight:400;transform:scaleX(1.033);transform-origin:0 0;">Comment</span>
<span class="t" style="left:903.3px;top:273.88px;font-size:10.43px;color:#555;font-weight:400;transform:scaleX(1.007);transform-origin:0 0;">Combine Files</span>
<span class="t" style="left:903.3px;top:305.08px;font-size:10.43px;color:#555;font-weight:400;transform:scaleX(0.986);transform-origin:0 0;">Organize Pages</span>
<span class="t" style="left:873.3px;top:339.84px;font-size:9.05px;color:#555;font-weight:400;transform:scaleX(0.969);transform-origin:0 0;">Delete, insert, extract and</span>
<span class="t" style="left:873.3px;top:351.64px;font-size:9.05px;color:#555;font-weight:400;transform:scaleX(0.962);transform-origin:0 0;">rotate pages.</span>
<span class="t" style="left:881.2px;top:403.99px;font-size:9.47px;color:#4a4a4a;font-weight:700;transform:scaleX(0.921);transform-origin:0 0;">Convert, edit and e-sign PDF</span>
<span class="t" style="left:899.6px;top:414.99px;font-size:9.47px;color:#4a4a4a;font-weight:700;transform:scaleX(0.925);transform-origin:0 0;">forms &amp; agreements</span>
<span class="t" style="left:912.9px;top:447.44px;font-size:9.88px;color:#fff;font-weight:400;transform:scaleX(0.812);transform-origin:0 0;">Free 7-Day Trial</span>
<span class="t" style="left:616.8px;top:453.52px;font-size:8.37px;color:#d8d8d8;font-weight:400;transform:scaleX(0.941);transform-origin:0 0;">61.6%</span>
<span class="t" style="left:893.0px;top:487.98px;font-size:10.43px;color:#333;font-weight:700;transform:scaleX(0.823);transform-origin:0 0;">Convert, edit and e-sign PDF</span>
<span class="t" style="left:670.6px;top:74.43px;font-size:8.23px;color:#555;font-weight:400;transform:scaleX(0.961);transform-origin:0 0;">1</span>
<span class="t" style="left:686.5px;top:74.43px;font-size:8.23px;color:#555;font-weight:400;transform:scaleX(1.313);transform-origin:0 0;">/ 1</span>
<!--/TEXT-->
</body></html>
